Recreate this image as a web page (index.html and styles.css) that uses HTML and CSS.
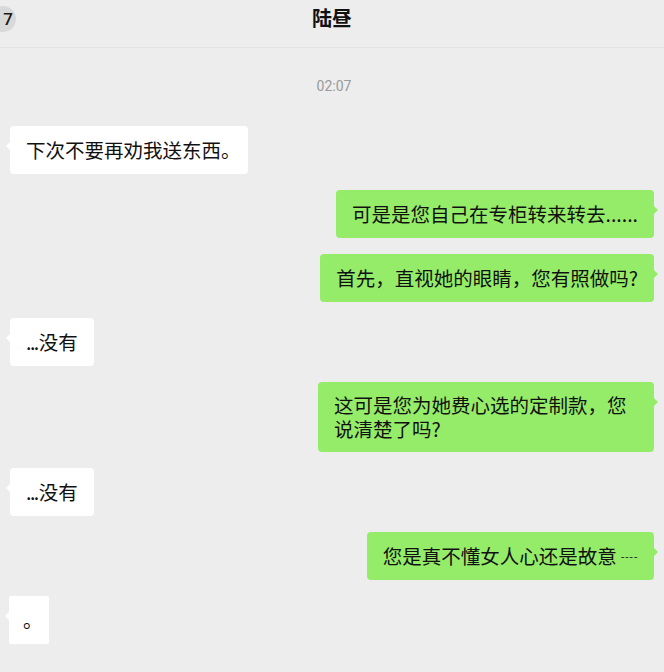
FILE: index.html
```html
<!DOCTYPE html>
<html lang="zh-CN">
<head>
  <meta charset="UTF-8">
  <meta name="viewport" content="width=device-width, initial-scale=1.0">
  <title>陆昼</title>
  <link rel="stylesheet" href="styles.css">
</head>
<body>
  <div class="chat">
    <!-- Header -->
    <div class="header">
      <div class="header-left">
        <span class="badge">7</span>
      </div>
      <div class="title">陆昼</div>
      <div class="header-right"></div>
    </div>

    <div class="messages">
      <div class="time">02:07</div>

      <div class="row left">
        <div class="bubble">下次不要再劝我送东西<span class="stop">。</span></div>
      </div>

      <div class="row right">
        <div class="bubble">可是是您自己在专柜转来转去......</div>
      </div>

      <div class="row right">
        <div class="bubble">首先，直视她的眼睛，您有照做吗?</div>
      </div>

      <div class="row left">
        <div class="bubble"><span class="dots">...</span>没有</div>
      </div>

      <div class="row right">
        <div class="bubble wrap">这可是您为她费心选的定制款，您说清楚了吗?</div>
      </div>

      <div class="row left">
        <div class="bubble"><span class="dots">...</span>没有</div>
      </div>

      <div class="row right">
        <div class="bubble">您是真不懂女人心还是故意<span class="dash">----</span></div>
      </div>

      <div class="row left">
        <div class="bubble dot">。</div>
      </div>
    </div>
  </div>
</body>
</html>
```

FILE: styles.css
```css
:root {
  --bg: #ededed;
  --green: #95ec69;
  --text: #111111;
}

body {
  margin: 0;
  padding: 0;
  background-color: var(--bg);
  font-family: "Noto Sans CJK SC", "Noto Sans", sans-serif;
  color: var(--text);
  overflow: hidden;
}

.chat {
  width: 664px;
  height: 672px;
}

.header {
  display: grid;
  grid-template-columns: 1fr auto 1fr;
  align-items: center;
  height: 47px;
  border-bottom: 1px solid #e2e2e2;
}

.header-left {
  display: flex;
  align-items: center;
  margin-top: -10px;
}

.badge {
  width: 26px;
  height: 26px;
  margin-left: -10px;
  border-radius: 50%;
  background-color: #d9d9d9;
  display: flex;
  align-items: center;
  justify-content: flex-end;
  padding-right: 3px;
  box-sizing: border-box;
  font-family: "Roboto", sans-serif;
  font-size: 17px;
  font-weight: 500;
  color: #1a1a1a;
}

.title {
  font-size: 20px;
  font-weight: 700;
  margin-top: -12px;
  color: #111;
}

.messages {
  display: flex;
  flex-direction: column;
  gap: 16px;
  padding: 26px 10px 0 10px;
}

.time {
  text-align: center;
  font-family: "Roboto", sans-serif;
  font-size: 14px;
  color: #9a9a9a;
  padding-left: 4px;
  margin-bottom: 12px;
  line-height: 24px;
}

.row {
  display: flex;
}

.row.right {
  justify-content: flex-end;
}

.bubble {
  position: relative;
  max-width: 336px;
  box-sizing: border-box;
  padding: 12px 16px;
  border-radius: 4px;
  font-size: 19.5px;
  line-height: 24px;
  background-color: #fff;
}

.bubble.wrap {
  padding: 11px 16px;
}

.row.right .bubble {
  background-color: var(--green);
}

.bubble::before {
  content: "";
  position: absolute;
  top: 15px;
  border: 5px solid transparent;
}

.row.left .bubble::before {
  left: -9px;
  border-right: 5px solid #fff;
}

.row.right .bubble::before {
  right: -9px;
  border-left: 5px solid var(--green);
}

.stop {
  letter-spacing: -9px;
}

.dots {
  letter-spacing: -1.5px;
  margin-right: 1px;
}

.dash {
  font-size: 11px;
  letter-spacing: 0.5px;
  vertical-align: 3px;
  margin-left: 4px;
}

.bubble.dot {
  padding: 12px 6px 12px 14px;
  margin-left: -1px;
  border-radius: 2px;
}
```
